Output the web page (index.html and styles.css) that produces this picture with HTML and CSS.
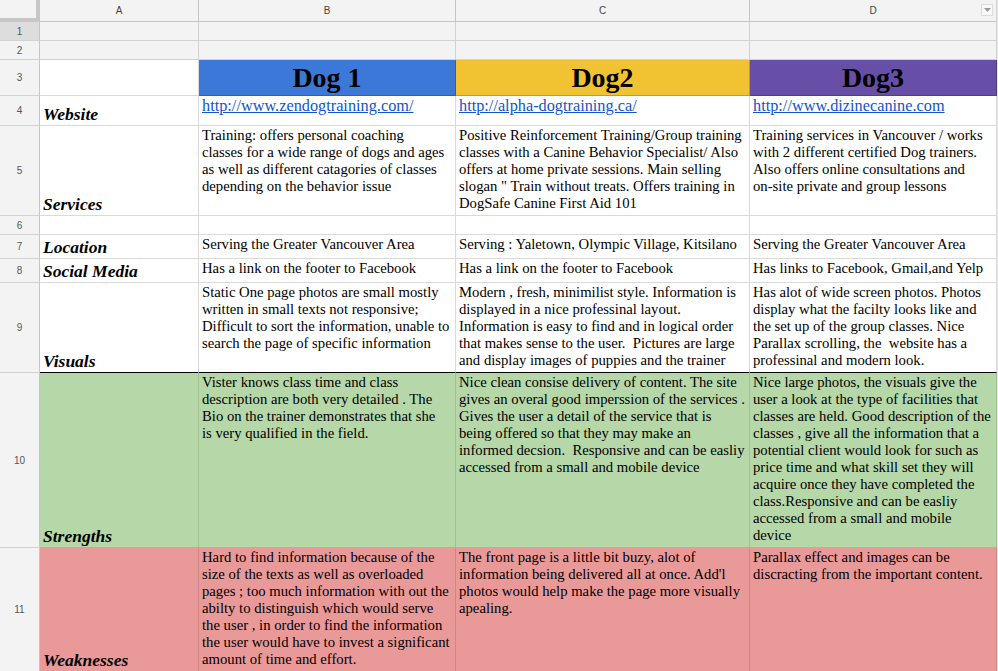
FILE: index.html
```html
<!DOCTYPE html>
<html>
<head>
<meta charset="utf-8">
<title>Dog training comparison</title>
<link rel="stylesheet" href="styles.css">
</head>
<body>
<div class="sheet">
  <div class="corner"></div>
  <div class="colhead">A</div>
  <div class="colhead">B</div>
  <div class="colhead">C</div>
  <div class="colhead colhead-last">D<span class="dropdown"><svg width="7" height="4" viewBox="0 0 7 4"><path d="M0 0h7L3.5 4z" fill="#9a9a9a"/></svg></span></div>

  <div class="rh rh-sel">1</div>
  <div class="cell frozen"></div><div class="cell frozen"></div><div class="cell frozen"></div><div class="cell frozen"></div>

  <div class="rh">2</div>
  <div class="cell frozen"></div><div class="cell frozen"></div><div class="cell frozen"></div><div class="cell frozen"></div>

  <div class="rh">3</div>
  <div class="cell"></div>
  <div class="cell hdr hdr-blue">Dog 1</div>
  <div class="cell hdr hdr-yellow">Dog2</div>
  <div class="cell hdr hdr-purple">Dog3</div>

  <div class="rh">4</div>
  <div class="cell lbl">Website</div>
  <div class="cell txt"><a class="link" href="#">http://www.zendogtraining.com/</a></div>
  <div class="cell txt"><a class="link" href="#">http://alpha-dogtraining.ca/</a></div>
  <div class="cell txt"><a class="link" href="#">http://www.dizinecanine.com</a></div>

  <div class="rh">5</div>
  <div class="cell lbl">Services</div>
  <div class="cell txt">Training: offers personal coaching<br>classes for a wide range of dogs and ages<br>as well as different catagories of classes<br>depending on the behavior issue</div>
  <div class="cell txt">Positive Reinforcement Training/Group training<br>classes with a Canine Behavior Specialist/ Also<br>offers at home private sessions. Main selling<br>slogan " Train without treats. Offers training in<br>DogSafe Canine First Aid 101</div>
  <div class="cell txt">Training services in Vancouver / works<br>with 2 different certified Dog trainers.<br>Also offers online consultations and<br>on-site private and group lessons</div>

  <div class="rh">6</div>
  <div class="cell"></div><div class="cell"></div><div class="cell"></div><div class="cell"></div>

  <div class="rh">7</div>
  <div class="cell lbl">Location</div>
  <div class="cell txt">Serving the Greater Vancouver Area</div>
  <div class="cell txt">Serving : Yaletown, Olympic Village, Kitsilano</div>
  <div class="cell txt">Serving the Greater Vancouver Area</div>

  <div class="rh">8</div>
  <div class="cell lbl">Social Media</div>
  <div class="cell txt">Has a link on the footer to Facebook</div>
  <div class="cell txt">Has a link on the footer to Facebook</div>
  <div class="cell txt">Has links to Facebook, Gmail,and Yelp</div>

  <div class="rh">9</div>
  <div class="cell lbl thick">Visuals</div>
  <div class="cell txt thick">Static One page photos are small mostly<br>written in small texts not responsive;<br>Difficult to sort the information, unable to<br>search the page of specific information</div>
  <div class="cell txt thick">Modern , fresh, minimilist style. Information is<br>displayed in a nice professinal layout.<br>Information is easy to find and in logical order<br>that makes sense to the user.&nbsp; Pictures are large<br>and display images of puppies and the trainer</div>
  <div class="cell txt thick">Has alot of wide screen photos. Photos<br>display what the facilty looks like and<br>the set up of the group classes. Nice<br>Parallax scrolling, the&nbsp; website has a<br>professinal and modern look.</div>

  <div class="rh">10</div>
  <div class="cell lbl good">Strengths</div>
  <div class="cell txt good">Vister knows class time and class<br>description are both very detailed . The<br>Bio on the trainer demonstrates that she<br>is very qualified in the field.</div>
  <div class="cell txt good">Nice clean consise delivery of content. The site<br>gives an overal good imperssion of the services .<br>Gives the user a detail of the service that is<br>being offered so that they may make an<br>informed decsion.&nbsp; Responsive and can be easliy<br>accessed from a small and mobile device</div>
  <div class="cell txt good">Nice large photos, the visuals give the<br>user a look at the type of facilities that<br>classes are held. Good description of the<br>classes , give all the information that a<br>potential client would look for such as<br>price time and what skill set they will<br>acquire once they have completed the<br>class.Responsive and can be easliy<br>accessed from a small and mobile<br>device</div>

  <div class="rh">11</div>
  <div class="cell lbl bad">Weaknesses</div>
  <div class="cell txt bad">Hard to find information because of the<br>size of the texts as well as overloaded<br>pages ; too much information with out the<br>abilty to distinguish which would serve<br>the user , in order to find the information<br>the user would have to invest a significant<br>amount of time and effort.</div>
  <div class="cell txt bad">The front page is a little bit buzy, alot of<br>information being delivered all at once. Add'l<br>photos would help make the page more visually<br>apealing.</div>
  <div class="cell txt bad">Parallax effect and images can be<br>discracting from the important content.</div>
</div>
</body>
</html>
```

FILE: styles.css
```css
html, body {
  margin: 0;
  padding: 0;
  background: #ffffff;
  overflow: hidden;
}

body {
  font-family: "Liberation Sans", Arial, sans-serif;
}

.sheet {
  display: grid;
  grid-template-columns: 40px 159px 257px 294px 247px;
  grid-template-rows: 22px 19px 19px 36px 30px 90px 19px 24px 24px 90px 175px 124px;
  width: 997px;
  border-right: 1px solid #e6e6e6;
}

.corner {
  box-sizing: border-box;
  background: #f3f3f3;
  border-right: 4px solid #c6c6c6;
  border-bottom: 4px solid #c6c6c6;
}

.colhead {
  box-sizing: border-box;
  background: #f3f3f3;
  border-right: 1px solid #c6c6c6;
  border-bottom: 1px solid #c6c6c6;
  display: flex;
  align-items: center;
  justify-content: center;
  font-size: 10px;
  color: #444;
  position: relative;
}

.colhead-last {
  border-right-color: #d4d4d4;
}

.dropdown {
  position: absolute;
  right: 3px;
  top: 4px;
  width: 10px;
  height: 10px;
  border: 1px solid #dcdcdc;
  background: #f8f8f8;
  display: flex;
  align-items: center;
  justify-content: center;
}

.rh {
  box-sizing: border-box;
  background: #f3f3f3;
  border-right: 1px solid #c6c6c6;
  border-bottom: 1px solid #d2d2d2;
  display: flex;
  align-items: center;
  justify-content: center;
  font-size: 10px;
  color: #555;
}

.rh-sel {
  background: #dddddd;
}

.cell {
  box-sizing: border-box;
  border-right: 1px solid #dadada;
  border-bottom: 1px solid #dadada;
  overflow: hidden;
  background: #ffffff;
}

.frozen {
  background: #f3f3f3;
  border-right-color: #d2d2d2;
  border-bottom-color: #d2d2d2;
}

.hdr {
  display: flex;
  align-items: center;
  justify-content: center;
  font-family: "Liberation Serif", "Times New Roman", serif;
  font-weight: bold;
  font-size: 28px;
  line-height: 35px;
  color: #000;
}

.hdr-blue {
  background: #3c78d8;
  border-right-color: #2f5fae;
  border-bottom-color: #2f5fae;
}

.hdr-yellow {
  background: #f1c232;
  border-right-color: #c49c25;
  border-bottom-color: #c49c25;
}

.hdr-purple {
  background: #674ea7;
  border-right-color: #523d86;
  border-bottom-color: #523d86;
}

.lbl {
  display: flex;
  align-items: flex-end;
  padding: 0 3px 1px;
  font-family: "Liberation Serif", "Times New Roman", serif;
  font-weight: bold;
  font-style: italic;
  font-size: 17.5px;
  line-height: 20px;
  color: #000;
  white-space: nowrap;
}

.txt {
  padding: 1px 3px 0;
  font-family: "Liberation Serif", "Times New Roman", serif;
  font-size: 14.7px;
  line-height: 17px;
  color: #000;
  white-space: nowrap;
}

.link {
  color: #1155cc;
  text-decoration: underline;
  font-size: 16.3px;
  line-height: 17px;
}

.thick {
  border-bottom-color: #000;
}

.good {
  background: #b6d7a8;
  border-right-color: #a0bf93;
  border-bottom-color: #a0bf93;
}

.bad {
  background: #ea9999;
  border-right-color: #cf8686;
  border-bottom-color: #cf8686;
}
```
